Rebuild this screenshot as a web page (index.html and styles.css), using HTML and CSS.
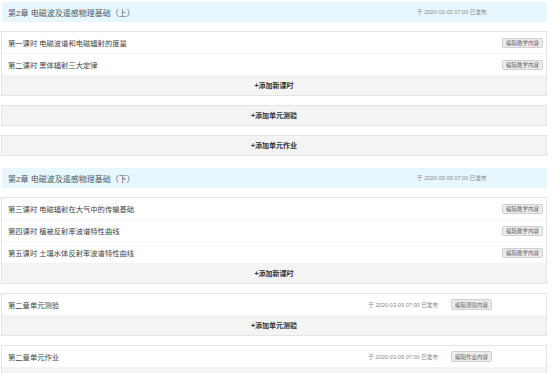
FILE: index.html
```html
<!DOCTYPE html>
<html lang="zh-CN">
<head>
	<meta charset="UTF-8">
	<link rel="stylesheet" href="styles.css">
	<title>章节管理</title>
</head>
<body>
	<div class="page">
		<div class="chapter">
			<div class="chapter-head">
				<span class="chapter-title">第2章 电磁波及遥感物理基础（上）</span>
				<span class="pub">于 2020-03-02 07:00 已发布</span>
			</div>
			<div class="card">
				<div class="row">
					<span class="row-title">第一课时 电磁波谱和电磁辐射的度量</span>
					<button class="btn">编辑教学内容</button>
				</div>
				<div class="row">
					<span class="row-title">第二课时 黑体辐射三大定律</span>
					<button class="btn">编辑教学内容</button>
				</div>
				<div class="add">+添加新课时</div>
			</div>
			<div class="card"><div class="add">+添加单元测验</div></div>
			<div class="card"><div class="add">+添加单元作业</div></div>
		</div>

		<div class="chapter">
			<div class="chapter-head">
				<span class="chapter-title">第2章 电磁波及遥感物理基础（下）</span>
				<span class="pub">于 2020-03-09 07:00 已发布</span>
			</div>
			<div class="card">
				<div class="row">
					<span class="row-title">第三课时 电磁辐射在大气中的传输基础</span>
					<button class="btn">编辑教学内容</button>
				</div>
				<div class="row">
					<span class="row-title">第四课时 植被反射率波谱特性曲线</span>
					<button class="btn">编辑教学内容</button>
				</div>
				<div class="row">
					<span class="row-title">第五课时 土壤水体反射率波谱特性曲线</span>
					<button class="btn">编辑教学内容</button>
				</div>
				<div class="add">+添加新课时</div>
			</div>
			<div class="card">
				<div class="row unit">
					<span class="row-title">第二章单元测验</span>
					<span class="unit-right">
						<span class="pub">于 2020-03-09 07:00 已发布</span>
						<button class="btn">编辑测验内容</button>
					</span>
				</div>
				<div class="add">+添加单元测验</div>
			</div>
			<div class="card">
				<div class="row unit">
					<span class="row-title">第二章单元作业</span>
					<span class="unit-right">
						<span class="pub">于 2020-03-09 07:00 已发布</span>
						<button class="btn">编辑作业内容</button>
					</span>
				</div>
				<div class="add">+添加单元作业</div>
			</div>
		</div>
	</div>
</body>
</html>
```

FILE: styles.css
```css
* {
	box-sizing: border-box;
}
body {
	margin: 0;
	background: #fff;
	font-family: "Liberation Sans", "Noto Sans CJK SC", sans-serif;
	color: #555;
}
.page {
	padding: 2px 6px 0 1px;
}
.chapter {
	margin-bottom: 12px;
}
.chapter-head {
	display: flex;
	align-items: center;
	height: 20px;
	margin-left: 1px;
	padding: 0 0 0 6px;
	background: #e8f7fd;
	margin-bottom: 9px;
}
.chapter-title {
	flex: 1;
	font-size: 8px;
	color: #555;
}
.chapter-head .pub {
	width: 130px;
}
.pub {
	font-size: 5.6px;
	color: #888;
}
.card {
	border: 1px solid #e4e4e4;
	margin-bottom: 9px;
	background: #fff;
}
.row {
	display: flex;
	align-items: center;
	justify-content: space-between;
	height: 22px;
	padding: 0 3px 0 6px;
	border-bottom: 1px solid #f3f3f3;
}
.row-title {
	font-size: 7.3px;
	color: #444;
}
.btn {
	height: 10px;
	padding: 0 3px;
	font-family: inherit;
	font-size: 5.5px;
	line-height: 8px;
	color: #666;
	background: #ececec;
	border: 1px solid #cfcfcf;
	border-radius: 2px;
}
.unit {
	padding-right: 54px;
}
.unit-right {
	display: flex;
	align-items: center;
	gap: 13px;
}
.unit .btn {
	height: 11px;
}
.add {
	height: 19px;
	line-height: 19px;
	text-align: center;
	font-size: 7px;
	font-weight: bold;
	color: #333;
	background: #f4f4f4;
}
```
